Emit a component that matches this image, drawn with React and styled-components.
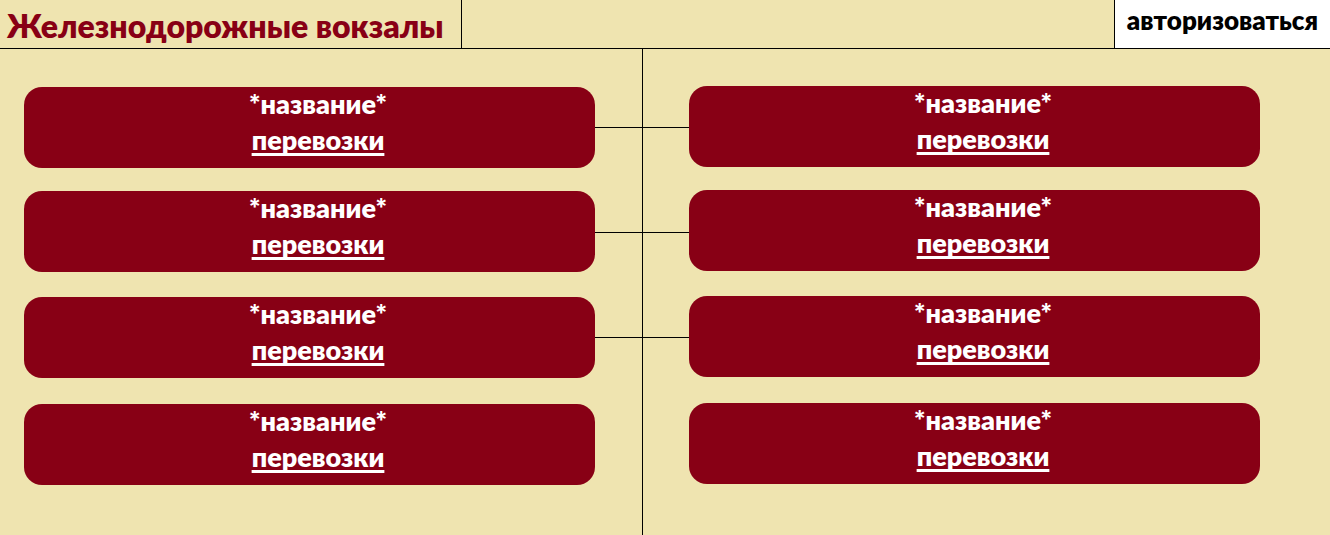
import React from 'react';
import styled, { createGlobalStyle } from 'styled-components';

const GlobalStyle = createGlobalStyle`
  *, *::before, *::after { box-sizing: border-box; }
  body {
    margin: 0;
    background: #efe4b0;
    color: #000;
    font-family: Lato, "Open Sans", sans-serif;
    font-weight: 800;
  }
`;

const Page = styled.div`
  display: flex;
  flex-direction: column;
  min-height: 100vh;
`;

const Header = styled.header`
  display: flex;
  justify-content: space-between;
  border-bottom: 1px solid #000;
`;

const Title = styled.h1`
  margin: 0;
  padding: 6px 17px 2px 7px;
  border-right: 1px solid #000;
  color: #880015;
  font-size: 32px;
  font-weight: inherit;
  line-height: 40px;
  white-space: nowrap;
`;

const LoginButton = styled.button`
  display: flex;
  padding: 3px 12px 0;
  border: 0;
  border-left: 1px solid #000;
  background: #fff;
  color: #000;
  font: inherit;
  font-size: 26px;
  line-height: 34px;
  cursor: pointer;
`;

const Board = styled.main`
  display: flex;
  flex: 1;
  padding: 0 70px 0 24px;
`;

const StationList = styled.ul`
  display: grid;
  flex: 1;
  grid-template-rows: 104px 106px 107px 81px;
  align-content: start;
  margin: 0;
  padding: ${({ $top }) => $top}px 0 49px;
  list-style: none;
`;

const StationCard = styled.li`
  display: flex;
  flex-direction: column;
  align-items: center;
  gap: 2px;
  height: 81px;
  padding-left: 17px;
  border-radius: 18px;
  background: #880015;
  color: #fff;
  font-size: 27px;
  line-height: 34px;
`;

const StationName = styled.div``;

const TransportLink = styled.a`
  color: inherit;
  text-decoration: underline 3px;
  text-underline-offset: 3px;
  text-decoration-skip-ink: none;
`;

const Spine = styled.div`
  display: flex;
  width: 94px;
`;

const SpineHalf = styled.div`
  flex: 1;

  &:first-child { border-right: 1px solid #000; }
`;

const Connector = styled.div`
  height: ${({ $height }) => $height}px;
  border-bottom: 1px solid #000;
`;

const stations = [1, 2, 3, 4];
const connectors = [79, 105, 105];

function Stations({ top }) {
  return (
    <StationList $top={top}>
      {stations.map((id) => (
        <StationCard key={id}>
          <StationName>*название*</StationName>
          <TransportLink href="#">перевозки</TransportLink>
        </StationCard>
      ))}
    </StationList>
  );
}

function Branches() {
  return (
    <SpineHalf>
      {connectors.map((height, index) => (
        <Connector key={index} $height={height} />
      ))}
    </SpineHalf>
  );
}

export default function App() {
  return (
    <Page>
      <GlobalStyle />
      <Header>
        <Title>Железнодорожные вокзалы</Title>
        <LoginButton type="button">авторизоваться</LoginButton>
      </Header>
      <Board>
        <Stations top={38} />
        <Spine>
          <Branches />
          <Branches />
        </Spine>
        <Stations top={37} />
      </Board>
    </Page>
  );
}
